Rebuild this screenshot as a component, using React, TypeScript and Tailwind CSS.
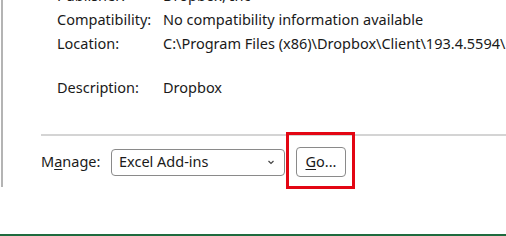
import React from "react";

export default function App() {
  return (
    <div
      className="relative w-[506px] h-[236px] overflow-hidden bg-white text-[#1a1a1a]"
      style={{ fontFamily: '"Noto Sans", "Open Sans", sans-serif' }}
    >
      <div className="flex h-[234px]">
        <div className="w-[1px] shrink-0" />
        <div className="w-[2px] h-[187px] shrink-0 bg-[#b4b4b4]" />
        <div className="flex-1 flex flex-col pl-[38px]">
          <div className="flex flex-col pl-[16px] text-[14.5px] -mt-[16px]">
            <div className="flex h-[24px] items-center">
              <span className="w-[106px]">Publisher:</span>
              <span>Dropbox, Inc</span>
            </div>
            <div className="flex h-[24px] items-center">
              <span className="w-[106px]">Compatibility:</span>
              <span>No compatibility information available</span>
            </div>
            <div className="flex h-[24px] items-center whitespace-nowrap">
              <span className="w-[106px] shrink-0">Location:</span>
              <span>C:\Program Files (x86)\Dropbox\Client\193.4.5594\Dropbox</span>
            </div>
            <div className="h-[20px]" />
            <div className="flex h-[24px] items-center">
              <span className="w-[106px]">Description:</span>
              <span>Dropbox</span>
            </div>
          </div>
          <div className="mt-[34px] h-[2px] bg-[#d4d4d4]" />
          <div className="flex items-center mt-[11px] text-[14.5px]">
            <span className="w-[70px]">
              M<span className="underline underline-offset-2">a</span>nage:
            </span>
            <div className="w-[174px] h-[27px] border border-[#8a8a8a] rounded-[4px] flex items-center justify-between pl-[7px] pr-[8px]">
              <span>Excel Add-ins</span>
              <svg width="10" height="10" viewBox="0 0 10 10" fill="none">
                <path d="M2.5 4 L5 6.5 L7.5 4" stroke="#444" strokeWidth="1.2" />
              </svg>
            </div>
            <div className="ml-[11px] w-[50px] h-[30px] border border-[#8a8a8a] rounded-[4px] flex items-center justify-center">
              <span>
                <span className="underline underline-offset-2">G</span>o...
              </span>
            </div>
          </div>
        </div>
      </div>
      <div className="h-[2px] bg-[#1e6b3e]" />
      <div className="absolute left-[286px] top-[132px] w-[69px] h-[57px] border-[3px] border-[#e30613]" />
    </div>
  );
}
